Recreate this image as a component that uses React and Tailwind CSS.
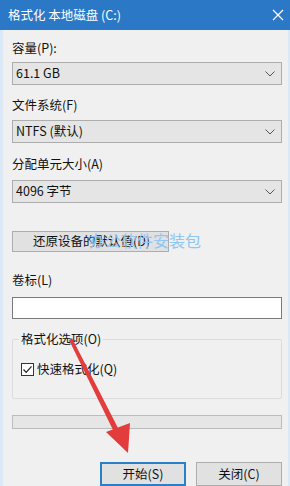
import React from 'react';

const font = { fontFamily: '"Noto Sans CJK SC", "Noto Sans", sans-serif' };

// Chevron for the combo boxes
const Chevron = () => (
  <svg width="10" height="6" viewBox="0 0 10 6" className="mr-[6px]">
    <path d="M0.5 0.5 L5 5 L9.5 0.5" fill="none" stroke="#555" strokeWidth="1" />
  </svg>
);

const Combo = ({ value }) => (
  <div className="flex h-[23px] w-[270px] items-center justify-between border border-[#adadad] bg-[#e5e5e5] pl-[3px] text-[12.5px] text-[#111]">
    <span>{value}</span>
    <Chevron />
  </div>
);

const Label = ({ children, className = '' }) => (
  <div className={`text-[12.5px] leading-[16px] text-[#111] ${className}`}>{children}</div>
);

const Button = ({ children, primary, className = '' }) => (
  <button
    className={`h-[24px] w-[86px] bg-[#e1e1e1] text-[12.5px] text-[#111] ${primary ? 'border-2 border-[#2a7fc9]' : 'border border-[#adadad]'} ${className}`}
  >
    {children}
  </button>
);

export default function App() {
  return (
    <div className="relative h-[486px] w-[290px] overflow-hidden bg-[#f0f0f0]" style={font}>
      {/* title bar */}
      <div className="flex h-[30px] items-center justify-between bg-[#2b78c6] pl-[8px] pr-[4px] text-[12.5px] text-white">
        <span>格式化 本地磁盘 (C:)</span>
        <svg width="12" height="12" viewBox="0 0 12 12" className="mr-[2px]">
          <path d="M1 1 L11 11 M11 1 L1 11" stroke="#fff" strokeWidth="1.3" />
        </svg>
      </div>

      <div className="flex h-[456px] flex-col border-l-[3px] border-r-[2px] border-[#dbe9f6] pl-[9px]">
        <Label className="mt-[10px]">容量(P):</Label>
        <div className="mt-[6px]"><Combo value="61.1 GB" /></div>

        <Label className="mt-[12px]">文件系统(F)</Label>
        <div className="mt-[7px]"><Combo value="NTFS (默认)" /></div>

        <Label className="mt-[13px]">分配单元大小(A)</Label>
        <div className="mt-[8px]"><Combo value="4096 字节" /></div>

        <button className="mt-[28px] h-[23px] w-[157px] border border-[#adadad] bg-[#e1e1e1] pl-[2px] text-[12.5px] text-[#111]">
          还原设备的默认值(D)
        </button>

        <Label className="mt-[20px]">卷标(L)</Label>
        <div className="mt-[9px] h-[24px] w-[270px] border border-[#7a7a7a] bg-white" />

        <div className="relative mt-[20px] h-[66px] w-[270px] rounded-[2px] border border-[#dcdcdc]">
          <div className="absolute left-[6px] top-[-9px] bg-[#f0f0f0] px-[2px] text-[12.5px] leading-[16px] text-[#111]">
            格式化选项(O)
          </div>
          <div className="ml-[8px] mt-[20px] flex items-center gap-[3px] text-[12.5px] text-[#111]">
            <div className="flex h-[13px] w-[13px] items-center justify-center border border-[#333] bg-white">
              <svg width="11" height="11" viewBox="0 0 11 11">
                <path d="M1.5 5.5 L4.2 8.3 L9.5 2.3" fill="none" stroke="#222" strokeWidth="1.2" />
              </svg>
            </div>
            <span>快速格式化(Q)</span>
          </div>
        </div>

        <div className="mt-[16px] h-[15px] w-[270px] border border-[#bcbcbc] bg-[#e6e6e6]" />

        <div className="mt-[33px] flex w-[270px] justify-end gap-[10px]">
          <Button primary>开始(S)</Button>
          <Button>关闭(C)</Button>
        </div>
      </div>

      {/* watermark */}
      <div className="absolute left-[89px] top-[232px] text-[16px] leading-[16px] text-[#8fc6f3]">
        办公软件安装包
      </div>

      {/* red arrow */}
      <svg className="absolute left-0 top-0" width="290" height="486" viewBox="0 0 290 486">
        <path d="M69 340 L113 430 L118 428 L72 338 Z" fill="#e23c3c" />
        <path d="M106 432 L128 453 L130 423 Z" fill="#e23c3c" />
      </svg>
    </div>
  );
}
